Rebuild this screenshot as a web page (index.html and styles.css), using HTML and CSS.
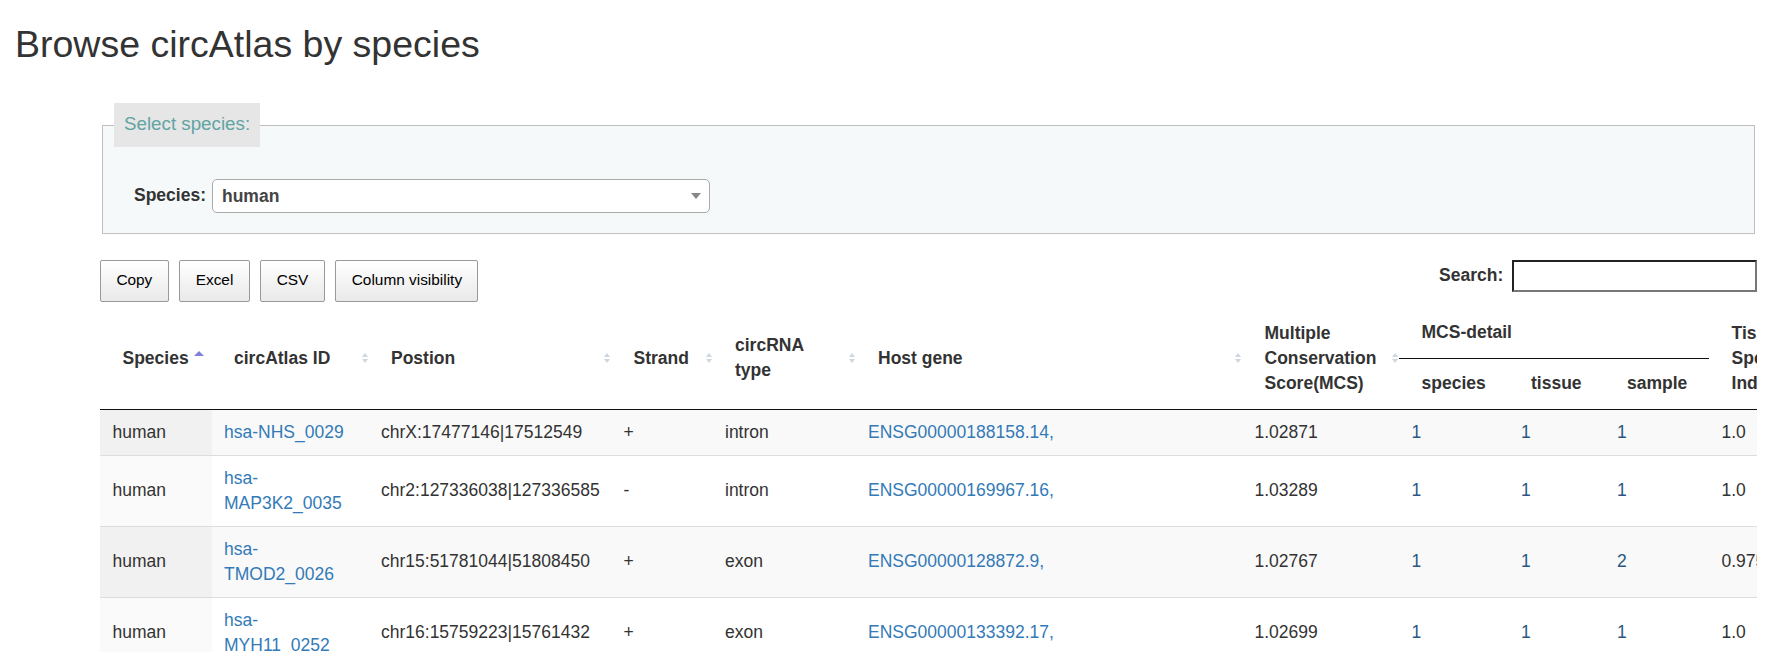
FILE: index.html
```html
<!DOCTYPE html>
<html lang="en">
<head>
<meta charset="utf-8">
<title>Browse circAtlas by species</title>
<link rel="stylesheet" href="styles.css">
</head>
<body>
<h2 class="page-title">Browse circAtlas by species</h2>
<div class="content">
  <fieldset class="species-box">
    <legend class="species-legend">Select species:</legend>
    <div class="species-row">
      <label class="species-label">Species:</label>
      <div class="select">
        <span class="select-text">human</span>
        <span class="select-arrow"></span>
      </div>
    </div>
  </fieldset>

  <div class="controls">
    <div class="buttons">
      <button class="dt-btn" type="button">Copy</button>
      <button class="dt-btn" type="button">Excel</button>
      <button class="dt-btn" type="button">CSV</button>
      <button class="dt-btn" type="button">Column visibility</button>
    </div>
    <div class="filter">
      <label class="filter-label">Search:</label>
      <input class="filter-input" type="text">
    </div>
  </div>

  <div class="table-wrap">
    <table class="data">
      <colgroup>
        <col class="w-species">
        <col class="w-id">
        <col class="w-pos">
        <col class="w-strand">
        <col class="w-type">
        <col class="w-host">
        <col class="w-mcs">
        <col class="w-sp">
        <col class="w-ti">
        <col class="w-sa">
        <col class="w-tsi">
      </colgroup>
      <thead>
        <tr>
          <th rowspan="2" class="sort-asc">Species</th>
          <th rowspan="2" class="sortable">circAtlas ID</th>
          <th rowspan="2" class="sortable">Postion</th>
          <th rowspan="2" class="sortable">Strand</th>
          <th rowspan="2" class="sortable">circRNA<br>type</th>
          <th rowspan="2" class="sortable">Host gene</th>
          <th rowspan="2" class="sortable">Multiple<br>Conservation<br>Score(MCS)</th>
          <th colspan="3" class="plain">MCS-detail</th>
          <th rowspan="2" class="sortable">Tissue<br>Specificity<br>Index</th>
        </tr>
        <tr>
          <th class="plain">species</th>
          <th class="plain">tissue</th>
          <th class="plain">sample</th>
        </tr>
      </thead>
      <tbody>
        <tr>
          <td class="sorted">human</td>
          <td><a class="link" href="#">hsa-NHS_0029</a></td>
          <td class="nw">chrX:17477146|17512549</td>
          <td>+</td>
          <td>intron</td>
          <td><a class="link" href="#">ENSG00000188158.14,</a></td>
          <td>1.02871</td>
          <td><a class="count" href="#">1</a></td>
          <td><a class="count" href="#">1</a></td>
          <td><a class="count" href="#">1</a></td>
          <td>1.0</td>
        </tr>
        <tr>
          <td class="sorted">human</td>
          <td><a class="link" href="#">hsa-MAP3K2_0035</a></td>
          <td class="nw">chr2:127336038|127336585</td>
          <td>-</td>
          <td>intron</td>
          <td><a class="link" href="#">ENSG00000169967.16,</a></td>
          <td>1.03289</td>
          <td><a class="count" href="#">1</a></td>
          <td><a class="count" href="#">1</a></td>
          <td><a class="count" href="#">1</a></td>
          <td>1.0</td>
        </tr>
        <tr>
          <td class="sorted">human</td>
          <td><a class="link" href="#">hsa-TMOD2_0026</a></td>
          <td class="nw">chr15:51781044|51808450</td>
          <td>+</td>
          <td>exon</td>
          <td><a class="link" href="#">ENSG00000128872.9,</a></td>
          <td>1.02767</td>
          <td><a class="count" href="#">1</a></td>
          <td><a class="count" href="#">1</a></td>
          <td><a class="count" href="#">2</a></td>
          <td>0.9753</td>
        </tr>
        <tr>
          <td class="sorted">human</td>
          <td><a class="link" href="#">hsa-MYH11_0252</a></td>
          <td class="nw">chr16:15759223|15761432</td>
          <td>+</td>
          <td>exon</td>
          <td><a class="link" href="#">ENSG00000133392.17,</a></td>
          <td>1.02699</td>
          <td><a class="count" href="#">1</a></td>
          <td><a class="count" href="#">1</a></td>
          <td><a class="count" href="#">1</a></td>
          <td>1.0</td>
        </tr>
      </tbody>
    </table>
  </div>
</div>
</body>
</html>
```

FILE: styles.css
```css
html {
  overflow: hidden;
}

body {
  margin: 0;
  font-family: "Liberation Sans", Arial, sans-serif;
  font-size: 17.5px;
  line-height: 1.42857;
  color: #333;
  background: #fff;
}

.page-title {
  margin: 24px 0 0;
  padding-left: 15px;
  font-size: 37.5px;
  font-weight: 400;
  line-height: 1.1;
  color: #333;
}

.content {
  margin: 0 29px 0 100px;
}

/* species selector */
.species-box {
  margin: 38px 2px 0;
  padding: 31.5px 11px 20px;
  border: 1px solid #c0c0c0;
  background: #f6f9fa;
  min-width: 0;
}

.species-legend {
  padding: 0 10px 2px;
  font-size: 18.75px;
  line-height: 42px;
  color: #62a3a4;
  background: #e6e6e6;
}

.species-row {
  display: flex;
  align-items: center;
  padding-left: 20px;
}

.species-label {
  font-weight: 700;
  margin-right: 6px;
}

.select {
  display: flex;
  align-items: center;
  justify-content: space-between;
  box-sizing: border-box;
  width: 498px;
  height: 34px;
  padding: 0 7.5px 0 9px;
  border: 1px solid #aaa;
  border-radius: 5px;
  background: #fff;
}

.select-text {
  font-weight: 700;
  line-height: 32px;
  color: #444;
}

.select-arrow {
  width: 0;
  height: 0;
  border-style: solid;
  border-width: 6px 5px 0 5px;
  border-color: #888 transparent transparent transparent;
}

/* table controls */
.controls {
  display: flex;
  justify-content: space-between;
  align-items: flex-start;
  margin-top: 26px;
}

.buttons {
  display: flex;
  gap: 10.6px;
}

.dt-btn {
  margin: 0;
  padding: 7.7px 15.4px;
  font-family: "Liberation Sans", Arial, sans-serif;
  font-size: 15.4px;
  line-height: 1.6;
  color: #000;
  border: 1px solid #999;
  border-radius: 2px;
  background: linear-gradient(to bottom, #ffffff 0%, #e9e9e9 100%);
}

.filter {
  display: flex;
  align-items: center;
  gap: 8.7px;
}

.filter-label {
  font-weight: 700;
}

.filter-input {
  box-sizing: border-box;
  width: 245px;
  height: 32px;
  margin: 0;
  padding: 1px 2px;
  border-width: 2px;
  border-style: solid;
  border-color: #222 #777 #777 #222;
  background: #fff;
  font-family: "Liberation Sans", Arial, sans-serif;
  font-size: 17.5px;
}

/* table */
.table-wrap {
  margin-top: 6px;
  overflow: hidden;
}

.data {
  width: 1759px;
  table-layout: fixed;
  border-collapse: separate;
  border-spacing: 0;
}

.w-species { width: 111.5px; }
.w-id { width: 157px; }
.w-pos { width: 242.5px; }
.w-strand { width: 101.5px; }
.w-type { width: 143px; }
.w-host { width: 386.5px; }
.w-mcs { width: 157px; }
.w-sp { width: 109.5px; }
.w-ti { width: 96px; }
.w-sa { width: 104.5px; }
.w-tsi { width: 150px; }

.data th {
  position: relative;
  padding: 12.5px 37.5px 12.5px 22.5px;
  text-align: left;
  vertical-align: middle;
  font-weight: 700;
  white-space: nowrap;
  border-bottom: 1px solid #111;
}

.data th.plain {
  padding-right: 22.5px;
}

.sortable::before,
.sortable::after {
  content: "";
  position: absolute;
  right: 1px;
  width: 0;
  height: 0;
  border-left: 3px solid transparent;
  border-right: 3px solid transparent;
}

.sortable::before {
  top: calc(50% - 5px);
  border-bottom: 4px solid #cdd6e1;
}

.sortable::after {
  top: calc(50% + 1px);
  border-top: 4px solid #cdd6e1;
}

.sort-asc::after {
  content: "";
  position: absolute;
  right: 7.5px;
  top: calc(50% - 7px);
  width: 0;
  height: 0;
  border-left: 5px solid transparent;
  border-right: 5px solid transparent;
  border-bottom: 5px solid #7f7fdc;
}

.data td {
  padding: 10px 12.5px;
  vertical-align: middle;
  border-top: 1px solid #ddd;
}

.data tbody tr:first-child td {
  border-top: none;
}

.data tbody tr:nth-child(odd) td {
  background: #f9f9f9;
}

.data tbody tr:nth-child(odd) td.sorted {
  background: #f1f1f1;
}

.data tbody tr:nth-child(even) td.sorted {
  background: #fafafa;
}

.nw {
  white-space: nowrap;
}

.link {
  color: #337ab7;
  text-decoration: none;
}

.count {
  color: #2b5783;
  text-decoration: none;
}
```
